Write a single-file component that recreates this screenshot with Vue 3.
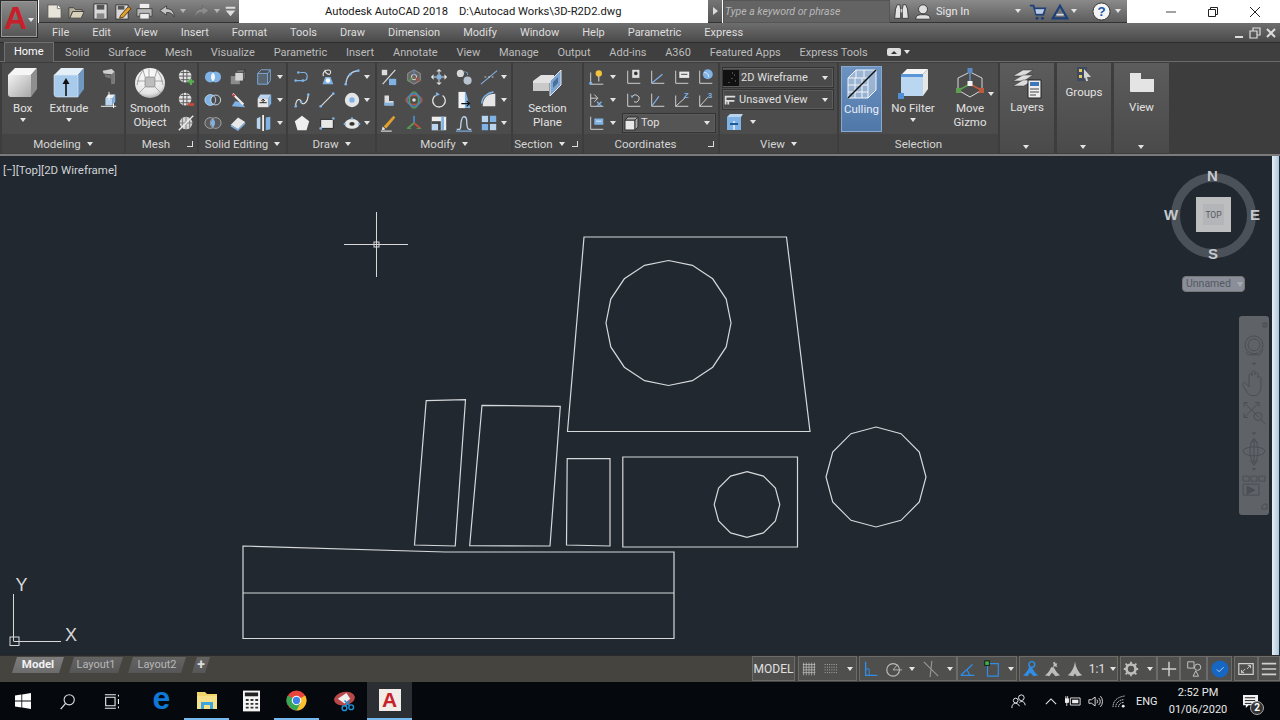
<script setup>
const blue = '#7fb2e5'
const pale = '#b9d4ee'

const icons = {
  // quick access
  new: `<path d="M3 3h10l4 4v10H3z" fill="#e8e4d8" stroke="#555"/><path d="M13 3v4h4" fill="#fff" stroke="#777"/>`,
  open: `<path d="M2 6h5l2 2h7v2H6l-3 7H2z" fill="#b9b39c" stroke="#444"/><path d="M6 10h12l-3 7H3z" fill="#d8d2bb" stroke="#444"/>`,
  save: `<path d="M3 2h14v16H3z" fill="#d9d9d9" stroke="#333"/><path d="M6 3h8v5H6z" fill="#555"/><path d="M6 12h8v6H6z" fill="#888"/>`,
  saveas: `<path d="M3 3h13v15H3z" fill="#d9d9d9" stroke="#333"/><path d="M5 4h7v4H5z" fill="#555"/><path d="M8 14l8-9 3 2-8 9-4 1z" fill="#e0a030" stroke="#5a3a10"/>`,
  print: `<path d="M5 2h10v5H5z" fill="#eee"/><path d="M2 7h16v8H2z" fill="#b8b8b8" stroke="#444"/><path d="M5 12h10v6H5z" fill="#eee" stroke="#555"/>`,
  undo: `<path d="M9 4L2 9l7 5v-3c4 0 6 1 8 5 0-6-3-9-8-9z" fill="#c4c4c4" stroke="#444"/>`,
  redo: `<path d="M11 4l7 5-7 5v-3c-4 0-6 1-8 5 0-6 3-9 8-9z" fill="#8b8b8b" stroke="#6a6a6a"/>`,
  qatmenu: `<path d="M5 5h10v2H5zM5 9h10l-5 6z" fill="#ddd"/>`,

  // modeling, mesh
  presspull: `<path d="M3 3l10-2 3 3v13l-3 1V7L4 6z" fill="#cfcfcf"/><path d="M13 7l3-3v13l-3 1zM5 7l7 1v4L6 10z" fill="#777"/>`,
  extface: `<path d="M6 8h8v8H6z" fill="${pale}"/><path d="M6 8l3-4h8l-3 4z" fill="#e6eff7"/><path d="M14 8l3-4v8l-3 4z" fill="${blue}"/><path d="M1 17h17M15 14v5M10 1v9" stroke="#fff" fill="none"/>`,
  meshadd: `<circle cx="9" cy="9" r="7" fill="#e3e3e3"/><path d="M2 9h14M4 5h10M4 13h10M7 2v14M11 2v14" stroke="#555" fill="none"/><path d="M12 15h7M15.5 12v7" stroke="#58b050" stroke-width="2.5"/>`,
  meshsub: `<circle cx="9" cy="9" r="7" fill="#e3e3e3"/><path d="M2 9h14M4 5h10M4 13h10M7 2v14M11 2v14" stroke="#555" fill="none"/><path d="M12 15h7" stroke="#c84a3a" stroke-width="3"/>`,
  meshcut: `<circle cx="10" cy="10" r="7" fill="#d5d5d5"/><path d="M3 10h14M10 3v14M6 4v12M14 4v12" stroke="#777" fill="none"/><path d="M2 18L18 2" stroke="#eee" stroke-width="1.5"/>`,

  // solid editing
  union: `<circle cx="7" cy="10" r="6" fill="${blue}"/><circle cx="13" cy="10" r="6" fill="${blue}"/><path d="M10 5c-3 3-3 7 0 10 3-3 3-7 0-10z" fill="#f2f6fa"/>`,
  subtract: `<circle cx="7" cy="10" r="6" fill="${blue}"/><circle cx="13" cy="10" r="5.5" fill="#4b4b4b" stroke="#d5e3f0"/><circle cx="7" cy="10" r="6" fill="none" stroke="${pale}"/>`,
  intersect: `<circle cx="7" cy="10" r="6" fill="#5a5a5a" stroke="#aaa"/><circle cx="13" cy="10" r="6" fill="#5a5a5a" stroke="#aaa"/><path d="M10 5c-3 3-3 7 0 10 3-3 3-7 0-10z" fill="${blue}"/>`,
  boxes: `<path d="M2 9h10v9H2z" fill="#8c8c8c"/><path d="M7 5h9v9H7z" fill="#d2d2d2"/><path d="M7 5l3-3h8l-2 3zM16 5l2-3v9l-2 3z" fill="#777" stroke="#222" stroke-width=".5"/>`,
  wirebox: `<path d="M3 6h11v12H3zM3 6l4-4h10v12l-3 4M14 6l3-4" fill="none" stroke="${blue}"/><path d="M3 6h11v12H3z" fill="${blue}" opacity=".25"/>`,
  fillet: `<path d="M3 17l4-6 7 2 4 5z" fill="${blue}"/><path d="M4 3l12 12" stroke="#eee" stroke-width="2.5"/><path d="M3 2l4 3-2 2z" fill="#c33"/>`,
  boxup: `<path d="M3 8h12v10H3z" fill="#e6e6e6"/><path d="M3 8l3-4h12l-3 4z" fill="${pale}"/><path d="M15 8l3-4v10l-3 4z" fill="${blue}"/><path d="M5 13h8M9 9v4M7 11l2-2 2 2" stroke="#111" fill="none"/>`,
  eraser: `<path d="M2 12l8-8 8 5-8 8z" fill="#e8e8e8"/><path d="M2 12l8 5v2l-8-5z" fill="${blue}"/><path d="M10 17l8-8v2l-8 8z" fill="${blue}"/>`,
  columns: `<path d="M2 5l4-2v14l-4-1z" fill="${pale}"/><path d="M12 4l5-1v14l-5 1z" fill="${blue}"/><path d="M9 1v18" stroke="#eee" stroke-width="2"/>`,

  // draw
  pline: `<path d="M4 14h8c5 0 5-9 0-9H8" fill="none" stroke="${blue}" stroke-width="1.3"/><circle cx="3" cy="14" r="1.5" fill="${blue}"/><circle cx="11" cy="14" r="1.5" fill="${blue}"/><circle cx="6" cy="5" r="1.5" fill="${blue}"/>`,
  hatch: `<path d="M5 18l3-8h6l3 8z" fill="${blue}"/><circle cx="11" cy="14" r="2.5" fill="#fff"/><path d="M6 9c-2-7 9-9 8-4S7 5 8 2" fill="none" stroke="#ddd" stroke-width="1.3"/>`,
  arc3: `<path d="M3 18C4 9 8 4 17 3" fill="none" stroke="${pale}" stroke-width="1.3"/><circle cx="3" cy="18" r="1.5" fill="${blue}"/><circle cx="8" cy="7" r="1.5" fill="${blue}"/><circle cx="17" cy="3" r="1.5" fill="${blue}"/>`,
  spline: `<path d="M3 17C3 8 8 8 9 12s7 3 8-8" fill="none" stroke="#e4e4e4" stroke-width="1.3"/><circle cx="3" cy="17" r="1.5" fill="${blue}"/><circle cx="9" cy="12" r="1.5" fill="${blue}"/><circle cx="17" cy="4" r="1.5" fill="${blue}"/>`,
  line: `<path d="M3 17L17 3" stroke="#e0e0e0" stroke-width="1.2"/><circle cx="3" cy="17" r="1.5" fill="${blue}"/><circle cx="17" cy="3" r="1.5" fill="${blue}"/>`,
  disc: `<circle cx="10" cy="10" r="8" fill="#e2e4e6"/><circle cx="10" cy="10" r="3" fill="${blue}"/>`,
  pentagon: `<path d="M10 2l8 6-3 10H5L2 8z" fill="#efefef"/>`,
  rect: `<path d="M3 6h14v10H3z" fill="#e8e8e8" stroke="#222"/><circle cx="3" cy="16" r="1.5" fill="${blue}"/><circle cx="17" cy="5" r="1.5" fill="${blue}"/>`,
  ellipse: `<ellipse cx="10" cy="11" rx="8" ry="5.5" fill="#e8e8e8"/><ellipse cx="10" cy="11" rx="3" ry="2" fill="#333"/><circle cx="10" cy="5" r="1.3" fill="${blue}"/><circle cx="2" cy="11" r="1.3" fill="${blue}"/><circle cx="18" cy="11" r="1.3" fill="${blue}"/>`,

  // modify
  trimbox: `<path d="M2 2h6v6H2z" fill="#ddd"/><path d="M10 12h8v7h-8z" fill="${blue}"/><path d="M3 18L17 2" stroke="#ddd" stroke-width="1.3"/>`,
  rotate3d: `<path d="M10 2l7 4v8l-7 4-7-4V6z" fill="#666" stroke="#999"/><circle cx="10" cy="10" r="3" fill="none" stroke="#ddd"/><path d="M4 15l5-5" stroke="#5a9a50" stroke-width="1.5"/><path d="M11 10l6 5" stroke="#b84a3a" stroke-width="1.5"/><path d="M10 2v6" stroke="#5a85c0" stroke-width="1.5"/>`,
  move: `<path d="M10 1l3 3H7zM10 19l3-3H7zM1 10l3-3v6zM19 10l-3-3v6z" fill="#e6e6e6"/><path d="M4 10h12M10 4v12" stroke="#e6e6e6"/><rect x="7.5" y="7.5" width="5" height="5" fill="${blue}"/>`,
  copy: `<circle cx="6" cy="6" r="4" fill="#d8d8d8"/><circle cx="14" cy="14" r="4.5" fill="#b9c4d0"/><path d="M9 4l5 1v4" stroke="${blue}" fill="none" stroke-dasharray="2 1"/>`,
  trim: `<path d="M1 18L19 3" stroke="${blue}" stroke-width="1.2"/><path d="M5 10h11" stroke="#ddd" stroke-dasharray="2 2"/>`,
  lshape: `<path d="M5 5h5v6h5v5H5z" fill="#dcdcdc"/><path d="M5 13h10v3H5z" fill="${blue}"/>`,
  gizmo3: `<ellipse cx="10" cy="10" rx="9" ry="5" fill="none" stroke="#c0503c" stroke-width="1.5"/><ellipse cx="10" cy="10" rx="5" ry="9" fill="none" stroke="#55a050" stroke-width="1.5"/><circle cx="10" cy="10" r="7" fill="none" stroke="#4a88c8" stroke-width="1.5"/><circle cx="10" cy="10" r="2" fill="#ddd"/>`,
  rotate: `<path d="M6 5a7 7 0 1 0 8 0" fill="none" stroke="#e0e0e0" stroke-width="1.5"/><path d="M7 1l4 3-5 2z" fill="${blue}"/>`,
  mirror: `<path d="M4 1h8l5 18H4z" fill="${blue}"/><path d="M4 1h7v18H4z" fill="#f2f2f2"/><path d="M7 14h9M13 11l3 3-3 3" stroke="#111" stroke-width="1.3" fill="none"/>`,
  filletb: `<path d="M3 17c0-9 5-14 14-14v14z" fill="#e6e6e6"/><path d="M2 14C2 7 8 2 15 1" stroke="${blue}" stroke-width="1.8" fill="none"/>`,
  brush: `<path d="M4 14L15 2l2 2L7 16z" fill="#e0a030"/><path d="M3 14l3 3-4 1z" fill="#eee"/><path d="M1 19h12" stroke="#ddd" stroke-width="1.3"/>`,
  scale3: `<path d="M10 2v8" stroke="#4a88c8" stroke-width="2"/><path d="M10 10L3 16" stroke="#55a050" stroke-width="2"/><path d="M10 10l7 6" stroke="#c0503c" stroke-width="2"/><path d="M2 16h5M13 16h5" stroke="#55a050" fill="none"/>`,
  offset: `<path d="M2 3h16v15H2z" fill="#ededed"/><path d="M2 8h10v10H2z" fill="#444"/><path d="M2 11h7v7H2z" fill="${pale}"/><path d="M14 3v15" stroke="${blue}" stroke-width="3"/>`,
  stretch: `<path d="M2 17h3c2 0 1-5 2-9s1-5 3-5 3 1 3 5 0 9 3 9h2" fill="none" stroke="${pale}" stroke-width="1.5"/><path d="M1 19h18" stroke="${blue}" stroke-width="1.3"/>`,
  array: `<path d="M2 2h7v7H2z" fill="${pale}"/><path d="M11 2h7v7h-7zM2 11h7v7H2z" fill="${blue}"/><path d="M11 11h7v7h-7z" fill="${pale}"/>`,

  // coordinates
  ucsSun: `<path d="M3 5v13h14" fill="none" stroke="#ddd"/><circle cx="3" cy="17" r="1.8" fill="${blue}"/><circle cx="12" cy="6" r="3.5" fill="#f4c43c"/><path d="M12 9v6" stroke="#eee"/>`,
  ucsDoc: `<path d="M3 3v14h14" fill="none" stroke="#ddd"/><path d="M8 2h8v9H8z" fill="#ddd"/><circle cx="12" cy="6" r="2" fill="#333"/>`,
  ucsBlue: `<path d="M3 3v14h14" fill="none" stroke="#ddd"/><path d="M3 17L15 7" stroke="${blue}" stroke-width="1.3"/>`,
  ucsCard: `<path d="M3 3v14h14" fill="none" stroke="#ddd"/><path d="M7 4h11v7H7z" fill="#e8e8e8"/><path d="M9 7h7" stroke="#333"/>`,
  ucsGlobe: `<path d="M3 3v14h14" fill="none" stroke="#ddd"/><circle cx="12" cy="7" r="5.5" fill="${blue}"/><path d="M8 5c3 0 5 2 5 5" stroke="#eee" fill="none"/>`,
  ucsX: `<path d="M3 3v14h14" fill="none" stroke="#ddd"/><path d="M3 8h7M7 4l4 4-4 4" fill="none" stroke="#ddd"/><path d="M10 12l5 5M15 12l-5 5" stroke="${blue}" stroke-width="1.5"/>`,
  ucsUndo: `<path d="M3 3v14h14" fill="none" stroke="#ddd"/><path d="M8 7a4 4 0 1 1 2 5" fill="none" stroke="#ddd"/><path d="M6 5l3 0-1 3z" fill="${blue}"/>`,
  ucsBlue2: `<path d="M3 3v14h14" fill="none" stroke="#ddd"/><path d="M3 17L11 6" stroke="${blue}" stroke-width="1.3"/>`,
  ucsZ: `<path d="M3 5v12h14" fill="none" stroke="#ddd"/><path d="M3 17L14 7" stroke="#ddd"/><text x="12" y="8" font-size="9" font-weight="700" fill="${blue}" font-family="Liberation Sans">Z</text>`,
  ucs3: `<path d="M3 5v12h14" fill="none" stroke="#ddd"/><path d="M3 17L12 7" stroke="#ddd"/><text x="12" y="8" font-size="9" font-weight="700" fill="${blue}" font-family="Liberation Sans">3</text>`,
  ucsPlane: `<path d="M3 3v14h14" fill="none" stroke="#ddd"/><path d="M7 5h10v7H7z" fill="${blue}"/><path d="M9 8h6" stroke="#eee"/>`,
  viewBox: `<path d="M3 5h14v13H3z" fill="${blue}"/><path d="M3 5l3-3h13l-2 3z" fill="${pale}"/><path d="M10 9v9" stroke="#eee" stroke-width="1.5"/><path d="M6 12h8" stroke="#1b5c98" stroke-width="2"/>`,

  // status bar
  grid: `<path d="M4 3v14M7 3v14M10 3v14M13 3v14M16 3v14M3 5h14M3 8h14M3 11h14M3 14h14" stroke="#c0c0c0" stroke-width=".8"/>`,
  snap: `<path d="M3 5h14M3 8h14M3 11h14M3 14h14" stroke="#bbb" stroke-dasharray="1 1.5"/>`,
  ortho: `<path d="M4 2v15h13" fill="none" stroke="#2f8fe8" stroke-width="1.5"/><path d="M4 10h4v7" fill="none" stroke="#2f8fe8"/>`,
  polar: `<circle cx="9" cy="11" r="7" fill="none" stroke="#bbb" stroke-width="1.3"/><path d="M9 11h10M9 11l5-6" stroke="#bbb"/>`,
  iso: `<path d="M2 2l16 16M11 1L9 19" stroke="#999" stroke-width="1.2"/>`,
  lweight: `<path d="M2 17L15 5" stroke="#2f8fe8" stroke-width="1.3"/><path d="M2 17h15M9 11l3 6" stroke="#2f8fe8" stroke-width="1.3"/>`,
  osnap: `<path d="M5 4h12v14H5z" fill="none" stroke="#2f8fe8" stroke-width="1.3"/><rect x="2" y="1" width="5" height="5" fill="#3cb54a" stroke="#111"/>`,
  anno: `<path d="M9 8c-2 5-4 7-7 9l5 1 3-4 4 4 5-1c-3-2-5-5-7-9z" fill="#2f8fe8"/><circle cx="12" cy="5" r="3.2" fill="none" stroke="#2f8fe8" stroke-width="1.6"/>`,
  annoGray: `<path d="M9 8c-2 5-4 7-7 9l5 1 3-4 4 4 5-1c-3-2-5-5-7-9z" fill="#bdbdbd"/><path d="M13 2l1 2 2 0-1 2 1 2-3-1-2 1 1-3-1-2z" fill="#bdbdbd"/>`,
  annoGray2: `<path d="M10 2c-1 7-4 12-8 15l6 1 2-3 2 3 6-1c-4-3-7-8-8-15z" fill="#bdbdbd"/>`,
  gear: `<circle cx="10" cy="10" r="5" fill="none" stroke="#bdbdbd" stroke-width="3"/><path d="M10 2v3M10 15v3M2 10h3M15 10h3M4 4l2 2M14 14l2 2M16 4l-2 2M6 14l-2 2" stroke="#bdbdbd" stroke-width="2"/>`,
  plus: `<path d="M10 2v16M2 10h16" stroke="#d0d0d0" stroke-width="1.6"/>`,
  shapes: `<path d="M3 2h7v7H3z" fill="none" stroke="#ccc"/><circle cx="14" cy="8" r="3.5" fill="none" stroke="#ccc"/><path d="M9 18l3-6 3 6z" fill="none" stroke="#ccc"/>`,
  isolate: `<circle cx="10" cy="10" r="9.5" fill="#1667c4"/><path d="M6.5 10.5l2.5 2.5 5-5" fill="none" stroke="#c7ddf3" stroke-width="1"/>`,
  full: `<path d="M2 4h16v12H2z" fill="none" stroke="#d0d0d0" stroke-width="1.3"/><path d="M5 14l4-4M5 11v3h3M15 6l-4 4M15 9V6h-3" stroke="#d0d0d0" fill="none"/>`,
  burger: `<path d="M2 4h16M2 10h16M2 16h16" stroke="#d0d0d0" stroke-width="1.8"/>`
}

const qat = [['new', 22], ['open', 22], ['save', 22, 2], ['saveas', 22], ['print', 22], ['undo', 22, 1], ['caret', 10], ['redo', 22, 2], ['caret', 10], ['qatmenu', 16]]
const menus = ['File', 'Edit', 'View', 'Insert', 'Format', 'Tools', 'Draw', 'Dimension', 'Modify', 'Window', 'Help', 'Parametric', 'Express']
const tabs = ['Solid', 'Surface', 'Mesh', 'Visualize', 'Parametric', 'Insert', 'Annotate', 'View', 'Manage', 'Output', 'Add-ins', 'A360', 'Featured Apps', 'Express Tools']

const modelingSmall = ['presspull', 'extface']
const meshSmall = ['meshadd', 'meshsub', 'meshcut']
const solidTools = ['union', 'boxes', 'wirebox', 'caret', 'subtract', 'fillet', 'boxup', 'caret', 'intersect', 'eraser', 'columns', 'caret']
const drawTools = ['pline', 'hatch', 'arc3', 'caret', 'spline', 'line', 'disc', 'caret', 'pentagon', 'rect', 'ellipse', 'caret']
const modifyTools = ['trimbox', 'rotate3d', 'move', 'copy', 'trim', 'caret', 'lshape', 'gizmo3', 'rotate', 'mirror', 'filletb', 'caret', 'brush', 'scale3', 'offset', 'stretch', 'array', 'caret']
const coordTools = ['ucsSun', 'caret', 'blank', 'ucsDoc', 'ucsBlue', 'ucsCard', 'ucsGlobe', 'ucsX', 'caret', 'blank', 'ucsUndo', 'ucsBlue2', 'ucsZ', 'ucs3']

// px widths of the status bar cells, measured from the screenshot
const statusGroups = [
  { gap: 0, items: [{ w: 43, text: 'MODEL' }] },
  { gap: 3, items: [{ w: 22, icon: 'grid' }, { w: 22, icon: 'snap' }, { w: 15, icon: 'caret' }] },
  { gap: 2, items: [{ w: 24, icon: 'ortho' }, { w: 22, icon: 'polar' }, { w: 14, icon: 'caret' }, { w: 24, icon: 'iso' }, { w: 14, icon: 'caret' }] },
  { gap: 0, items: [{ w: 22, icon: 'lweight' }, { w: 26, icon: 'osnap' }, { w: 12, icon: 'caret' }] },
  { gap: 2, items: [{ w: 22, icon: 'anno' }, { w: 22, icon: 'annoGray' }, { w: 24, icon: 'annoGray2' }, { w: 20, text: '1:1' }, { w: 11, icon: 'caret' }] },
  { gap: 2, items: [{ w: 22, icon: 'gear' }, { w: 15, icon: 'caret' }] },
  { gap: 0, items: [{ w: 23, icon: 'plus' }] },
  { gap: 0, items: [{ w: 27, icon: 'shapes' }] },
  { gap: 0, items: [{ w: 25, icon: 'isolate' }] },
  { gap: 2, items: [{ w: 24, icon: 'full' }] },
  { gap: 0, items: [{ w: 22, icon: 'burger' }] }
]

function polygon(cx, cy, r, sides) {
  const pts = []
  for (let i = 0; i < sides; i++) {
    const a = (i / sides) * Math.PI * 2
    pts.push(`${(cx + Math.sin(a) * r).toFixed(1)},${(cy - Math.cos(a) * r).toFixed(1)}`)
  }
  return pts.join(' ')
}

const drawing = [
  '584,237 786.5,237 810,431.5 567.5,431.5',
  '426.2,400.7 465.5,399.7 455.2,546 414.5,545',
  '482,405.3 560.3,406.3 550,546 469.7,545.7',
  '567.2,458.7 610,458.7 610,546 566.5,545',
  '622.8,457 797.5,457 797.5,547 622.8,547',
  '243,546 445,552 674,552 674,638.5 243,638.5',
  polygon(668.5, 323, 62.5, 16),
  polygon(747, 504.5, 32.8, 12),
  polygon(876, 477, 50, 12)
]
</script>

<template>
  <div class="app">
    <!-- title bar -->
    <header class="titlebar">
      <div class="app-button">
        <span class="app-a">A</span>
        <i class="caret app-caret"></i>
      </div>
      <div class="qat">
        <span v-for="q in qat" :key="q[0] + q[1]" class="qat-cell" :style="{ width: q[1] + 'px', marginLeft: (q[2] || 0) + 'px' }">
          <i v-if="q[0] === 'caret'" class="caret caret-dim"></i>
          <svg v-else viewBox="0 0 20 20" width="19" height="19" v-html="icons[q[0]]"></svg>
        </span>
      </div>
      <div class="doc-title">
        <span>Autodesk AutoCAD 2018</span>
        <span class="doc-path">D:\Autocad Works\3D-R2D2.dwg</span>
      </div>
      <div class="search-arrow"><i class="caret-right"></i></div>
      <div class="search-box">Type a keyword or phrase</div>
      <div class="account">
        <svg class="acc-bino" viewBox="0 0 20 20" width="17" height="17">
          <path d="M2 18l1-11 2-5h3l1 5v11zM11 18V7l1-5h3l2 5 1 11z" fill="#e4e4e4" stroke="#333"/>
          <path d="M9 7h2v4H9z" fill="#ccc"/>
        </svg>
        <svg class="acc-user" viewBox="0 0 20 20" width="18" height="18">
          <circle cx="10" cy="7" r="5" fill="#e0e0e0" stroke="#333"/>
          <path d="M2 18c0-5 4-5 8-5s8 0 8 5z" fill="#e0e0e0" stroke="#333"/>
        </svg>
        <span class="sign-in">Sign In</span>
        <i class="caret acc-caret1"></i>
        <svg class="acc-cart" viewBox="0 0 20 20" width="18" height="18">
          <path d="M1 3h4l3 10h8l2-7H6" fill="none" stroke="#1d3f7a" stroke-width="2"/>
          <circle cx="9" cy="17" r="1.7" fill="#1d3f7a"/><circle cx="15" cy="17" r="1.7" fill="#1d3f7a"/>
          <path d="M7 7h10l-2 5H8z" fill="#b8cbe4"/>
        </svg>
        <svg class="acc-tri" viewBox="0 0 20 20" width="18" height="18">
          <path d="M10 3l8 14H2z" fill="none" stroke="#1d3f7a" stroke-width="2.4"/>
          <path d="M6 13h8" stroke="#d3dce8" stroke-width="2"/>
        </svg>
        <i class="caret acc-caret2"></i>
        <svg class="acc-help" viewBox="0 0 20 20" width="19" height="19">
          <circle cx="10" cy="10" r="9" fill="#f4f4f4" stroke="#333"/>
          <text x="10" y="15" text-anchor="middle" font-size="14" font-weight="700" fill="#1a56a8" font-family="Liberation Sans">?</text>
        </svg>
        <i class="caret acc-caret3"></i>
      </div>
      <div class="window-btns">
        <svg viewBox="0 0 12 12" width="12" height="12"><path d="M1 6h10" stroke="#444"/></svg>
        <svg viewBox="0 0 12 12" width="12" height="12"><path d="M1.5 3.5h7v7h-7zM3.5 3V1.5h7v7H9" fill="none" stroke="#222"/></svg>
        <svg viewBox="0 0 12 12" width="12" height="12"><path d="M1 1l10 10M11 1L1 11" stroke="#222"/></svg>
      </div>
    </header>

    <!-- menu bar -->
    <nav class="menubar">
      <span v-for="m in menus" :key="m">{{ m }}</span>
      <div class="doc-btns">
        <svg viewBox="0 0 12 12" width="12" height="12"><path d="M2 10h8" stroke="#ddd" stroke-width="2"/></svg>
        <svg viewBox="0 0 12 12" width="12" height="12"><path d="M1 4h7v7H1zM4 4V1h7v7H8" fill="none" stroke="#ddd" stroke-width="1.2"/></svg>
        <svg viewBox="0 0 12 12" width="12" height="12"><path d="M2 2l8 8M10 2l-8 8" stroke="#ddd" stroke-width="2"/></svg>
      </div>
    </nav>

    <!-- ribbon tabs -->
    <div class="tabs">
      <span class="tab tab-active">Home</span>
      <span v-for="t in tabs" :key="t" class="tab">{{ t }}</span>
      <span class="tab-extra">
        <svg viewBox="0 0 14 8" width="14" height="8"><rect width="14" height="8" rx="2" fill="#ddd"/><path d="M4 6l3-3 3 3z" fill="#333"/></svg>
        <i class="caret"></i>
      </span>
    </div>

    <!-- ribbon -->
    <div class="ribbon">
      <section class="panel p-modeling">
        <div class="panel-body">
          <div class="big big-box">
            <svg viewBox="0 0 32 32" width="32" height="32">
              <path d="M1 8l7-7h22l-6 7z" fill="#f6f6f6"/>
              <path d="M24 8l6-7v21l-6 8z" fill="#8e8e8e"/>
              <path d="M1 8h23v22H4a3 3 0 0 1-3-3z" fill="url(#gradBox)"/>
            </svg>
            <span>Box</span><i class="caret"></i>
          </div>
          <div class="big big-extrude">
            <svg viewBox="0 0 32 32" width="32" height="32">
              <path d="M1 8l7-7h23l-6 7z" fill="#e5eff8"/>
              <path d="M25 8l6-7v21l-6 8z" fill="#6f99c2"/>
              <path d="M1 8h24v22H4a3 3 0 0 1-3-3z" fill="#a8cbec" stroke="#dde9f3" stroke-width=".6"/>
              <path d="M13 29V15" stroke="#111" stroke-width="1.6"/><path d="M9.5 17L13 11l3.5 6z" fill="#111"/>
            </svg>
            <span>Extrude</span><i class="caret"></i>
          </div>
          <div class="tool-col col-model">
            <span v-for="t in modelingSmall" :key="t" class="tool"><svg viewBox="0 0 20 20" width="20" height="20" v-html="icons[t]"></svg></span>
          </div>
        </div>
        <div class="panel-title">Modeling <i class="caret"></i></div>
      </section>

      <section class="panel p-mesh">
        <div class="panel-body">
          <div class="big big-smooth">
            <svg viewBox="0 0 32 32" width="32" height="32">
              <circle cx="16" cy="16" r="15" fill="url(#gradSphere)"/>
              <rect x="11" y="10" width="10" height="10" rx="1" fill="#bdbdbd" stroke="#777" stroke-width=".6"/>
              <path d="M9 3L5 10l-2 8M23 3l4 7 2 8M11 10L9 3M21 10l2-7M11 20l-6 6M21 20l6 6M11 14H3M21 14h8M15 2v8" fill="none" stroke="#8a8a8a" stroke-width=".7"/>
            </svg>
            <span>Smooth</span><span>Object</span>
          </div>
          <div class="tool-col col-mesh">
            <span v-for="t in meshSmall" :key="t" class="tool"><svg viewBox="0 0 20 20" width="20" height="20" v-html="icons[t]"></svg></span>
          </div>
        </div>
        <div class="panel-title title-launch">Mesh <i class="launch"></i></div>
      </section>

      <section class="panel p-solid">
        <div class="panel-body">
          <div class="tool-grid grid-solid">
            <span v-for="(t, i) in solidTools" :key="i" class="tool">
              <i v-if="t === 'caret'" class="caret"></i>
              <svg v-else viewBox="0 0 20 20" width="20" height="20" v-html="icons[t]"></svg>
            </span>
          </div>
        </div>
        <div class="panel-title">Solid Editing <i class="caret"></i></div>
      </section>

      <section class="panel p-draw">
        <div class="panel-body">
          <div class="tool-grid grid-draw">
            <span v-for="(t, i) in drawTools" :key="i" class="tool">
              <i v-if="t === 'caret'" class="caret"></i>
              <svg v-else viewBox="0 0 20 20" width="20" height="20" v-html="icons[t]"></svg>
            </span>
          </div>
        </div>
        <div class="panel-title">Draw <i class="caret"></i></div>
      </section>

      <section class="panel p-modify">
        <div class="panel-body">
          <div class="tool-grid grid-modify">
            <span v-for="(t, i) in modifyTools" :key="i" class="tool">
              <i v-if="t === 'caret'" class="caret"></i>
              <svg v-else viewBox="0 0 20 20" width="20" height="20" v-html="icons[t]"></svg>
            </span>
          </div>
        </div>
        <div class="panel-title">Modify <i class="caret"></i></div>
      </section>

      <section class="panel p-section">
        <div class="panel-body body-center">
          <div class="big">
            <svg viewBox="0 0 32 32" width="32" height="32">
              <path d="M2 14l8-6h13v8l-14 0v8H2z" fill="#e2e2e2"/>
              <path d="M2 16h16v8H2z" fill="#c9c9c9"/>
              <path d="M19 14l11-11v15l-11 11z" fill="#7ea6d2" stroke="#dfe8f2"/>
              <path d="M22 15l5-5v6l-5 5z" fill="#4c6f9a"/>
            </svg>
            <span>Section</span><span>Plane</span>
          </div>
        </div>
        <div class="panel-title title-launch title-section">Section <i class="caret"></i> <i class="launch"></i></div>
      </section>

      <section class="panel p-coord">
        <div class="panel-body">
          <div class="tool-grid grid-coord">
            <span v-for="(t, i) in coordTools" :key="i" class="tool">
              <i v-if="t === 'caret'" class="caret"></i>
              <template v-else-if="t === 'blank'"></template>
              <svg v-else viewBox="0 0 20 20" width="20" height="20" v-html="icons[t]"></svg>
            </span>
            <span class="tool"><svg viewBox="0 0 20 20" width="20" height="20" v-html="icons.ucsPlane"></svg></span>
            <span class="tool"><i class="caret"></i></span>
            <span class="tool"></span>
            <div class="combo combo-top">
              <svg viewBox="0 0 16 16" width="16" height="16"><path d="M2 5h10v10H2z" fill="#e8e8e8" stroke="#333"/><path d="M2 5l3-3h10l-3 3zM12 5l3-3v10l-3 3z" fill="#aaa" stroke="#333"/></svg>
              <span>Top</span><i class="caret combo-caret"></i>
            </div>
          </div>
        </div>
        <div class="panel-title title-launch">Coordinates <i class="launch"></i></div>
      </section>

      <section class="panel p-view">
        <div class="panel-body body-col">
          <div class="combo">
            <svg viewBox="0 0 16 16" width="16" height="16"><rect width="16" height="16" fill="#111"/><path d="M9 3h1M11 5h1M9 8v1M6 12v1M12 11h1" stroke="#888"/></svg>
            <span>2D Wireframe</span><i class="caret combo-caret"></i>
          </div>
          <div class="combo">
            <svg viewBox="0 0 16 16" width="14" height="14"><path d="M2 3h12v2H4v3h9v2H7v3H5v-3H4v3H2z" fill="#ddd"/></svg>
            <span>Unsaved View</span><i class="caret combo-caret"></i>
          </div>
          <div class="view-tool">
            <svg viewBox="0 0 20 20" width="20" height="20" v-html="icons.viewBox"></svg>
            <i class="caret"></i>
          </div>
        </div>
        <div class="panel-title">View <i class="caret"></i></div>
      </section>

      <section class="panel p-selection">
        <div class="panel-body">
          <div class="big big-culling">
            <svg viewBox="0 0 32 32" width="32" height="32">
              <path d="M2 10l8-8h20v20l-8 8H2z" fill="#cfdcea" opacity=".5"/>
              <path d="M2 10h20v20H2zM2 10l8-8h20v20l-8 8M22 10l8-8M9 10v20M16 10v20M2 17h20M2 24h20M10 2l0 8M18 2l0 8" fill="none" stroke="#f2f6fa"/>
              <path d="M2 30L30 2" stroke="#111" stroke-width="1.4"/>
            </svg>
            <span>Culling</span>
          </div>
          <div class="big big-filter">
            <svg viewBox="0 0 32 32" width="32" height="32">
              <path d="M5 7l5-5h21l-5 5z" fill="#f4f4f4"/>
              <path d="M26 7l5-5v20l-5 7z" fill="#e6e6e6"/>
              <path d="M4 7h22v22H7a3 3 0 0 1-3-3z" fill="#bad6f0"/>
              <path d="M4 7h22v3H4z" fill="#5b97d8"/>
              <rect x="1" y="26" width="6" height="6" fill="#4f8fd6"/>
            </svg>
            <span>No Filter</span><i class="caret"></i>
          </div>
          <div class="big big-gizmo">
            <svg viewBox="0 0 32 32" width="32" height="32">
              <path d="M16 5l12 6v12l-12 7-12-7V11z" fill="none" stroke="#d8d8d8"/>
              <path d="M16 5v12" stroke="#6a9ad0" stroke-width="1.3"/>
              <path d="M16 17L5 23" stroke="#5aa04f" stroke-width="1.5"/>
              <path d="M16 17l11 6" stroke="#c05a3c" stroke-width="1.5"/>
              <rect x="13.5" y="1" width="5" height="5" fill="#5a8ac4"/>
              <rect x="2" y="21" width="5" height="5" fill="#5aa04f"/>
              <rect x="25" y="21" width="5" height="5" fill="#c05a3c"/>
              <rect x="13.5" y="14" width="5" height="5" fill="#f4f4f4"/>
            </svg>
            <span>Move</span><span>Gizmo</span>
            <i class="caret gizmo-caret"></i>
          </div>
        </div>
        <div class="panel-title">Selection</div>
      </section>

      <section class="panel panel-slim p-layers">
        <div class="slim-body">
          <svg viewBox="0 0 32 32" width="32" height="32">
            <path d="M2 9l10-6h10l-9 6z" fill="#ddd" stroke="#333" stroke-width=".5"/>
            <path d="M2 14l10-6h10l-9 6z" fill="#ddd" stroke="#333" stroke-width=".5"/>
            <path d="M2 19l10-6h10l-9 6z" fill="#ddd" stroke="#333" stroke-width=".5"/>
            <path d="M17 13h13v18H17z" fill="#eee" stroke="#222"/>
            <path d="M19 15h9v4h-9z" fill="#3f78b8"/>
            <path d="M19 22h9M19 25h9M19 28h6" stroke="#444"/>
          </svg>
          <span>Layers</span>
        </div>
        <i class="caret slim-caret"></i>
      </section>

      <section class="panel panel-slim p-groups">
        <div class="slim-body slim-top">
          <svg viewBox="0 0 16 16" width="16" height="16">
            <rect x="1" y="1" width="10" height="14" fill="#3d4a60"/>
            <rect x="3" y="3" width="3" height="3" fill="#e3c75a"/>
            <rect x="3" y="9" width="3" height="3" fill="#e3c75a"/>
            <path d="M8 3l7 8-4 0 1 4-2 0-1-4-1 2z" fill="#d4d4d4"/>
          </svg>
          <span>Groups</span>
        </div>
        <i class="caret slim-caret"></i>
      </section>

      <section class="panel panel-slim p-viewslim">
        <div class="slim-body">
          <svg viewBox="0 0 26 20" width="26" height="20" class="folder">
            <path d="M1 1h11v6h13v13H2a1 1 0 0 1-1-1z" fill="#e4e4e4"/>
          </svg>
          <span>View</span>
        </div>
        <i class="caret slim-caret"></i>
      </section>
    </div>

    <svg class="defs" width="0" height="0">
      <defs>
        <linearGradient id="gradBox" x1="0" y1="0" x2="1" y2="1">
          <stop offset="0" stop-color="#f2f2f2"/><stop offset="1" stop-color="#a8a8a8"/>
        </linearGradient>
        <radialGradient id="gradSphere" cx=".45" cy=".3" r=".8">
          <stop offset="0" stop-color="#ffffff"/><stop offset=".7" stop-color="#e4e4e4"/><stop offset="1" stop-color="#8c8c8c"/>
        </radialGradient>
      </defs>
    </svg>

    <!-- drawing area -->
    <main class="canvas-row">
      <div class="canvas">
        <svg class="drawing" viewBox="0 156 1272 499" width="1272" height="499">
          <polygon v-for="(p, i) in drawing" :key="i" :points="p" class="edge"/>
          <line x1="243" y1="593" x2="674" y2="593" class="edge"/>
          <!-- crosshair -->
          <path d="M344 244.5h64M376.5 212v65" class="cursor"/>
          <rect x="374" y="242" width="5" height="5" class="cursor"/>
          <!-- ucs icon -->
          <path d="M13.5 594v47M13.5 641.5h47.5" class="cursor"/>
          <rect x="10" y="637" width="9" height="8.5" class="cursor"/>
          <text x="21.5" y="590.5" class="ucs-letter">Y</text>
          <text x="71" y="640.5" class="ucs-letter">X</text>
        </svg>

        <div class="viewport-label">[−][Top][2D Wireframe]</div>

        <div class="viewcube">
          <div class="cube-ring"></div>
          <div class="cube-face"><span>TOP</span></div>
          <b class="dir dir-n">N</b>
          <b class="dir dir-s">S</b>
          <b class="dir dir-e">E</b>
          <b class="dir dir-w">W</b>
        </div>
        <div class="ucs-menu">Unnamed <i class="tri-outline"></i></div>

        <div class="navbar">
          <svg viewBox="0 0 30 200" width="30" height="199" fill="none" stroke="#4a4e55" stroke-width="1">
            <path d="M24 7h4v4h-4zM26 7v4"/>
            <circle cx="15" cy="29" r="9"/><circle cx="15" cy="29" r="6"/><path d="M7 36l2 3h12l3-5"/>
            <path d="M13 47l2 2 2-2" fill="#4a4e55"/>
            <path d="M9 78l-5-8c-1-3 2-4 3-2l3 3V60c0-3 3-3 3 0v-3c0-3 3-3 3 0v2c0-3 3-3 3 0v3c1-2 3-1 3 1v8c0 4-2 7-4 9H12z"/>
            <path d="M5 87l15 15M20 87L5 102M5 87v4M5 87h4M20 87h-4M20 87v4M5 102v-4M5 102h4"/>
            <circle cx="19" cy="101" r="4"/><path d="M22 104l5 5"/>
            <path d="M13 117l2 2 2-2" fill="#4a4e55"/>
            <path d="M15 123v27M11 128l4-5 4 5M11 145l4 5 4-5"/>
            <ellipse cx="15" cy="136" rx="11" ry="4.5"/><ellipse cx="15" cy="136" rx="4" ry="11"/>
            <path d="M13 153l2 2 2-2" fill="#4a4e55"/>
            <path d="M4 161h6v5H4zM12 161h6v5h-6zM20 161h6v5h-6zM4 169h16v11H4z"/>
            <path d="M8 171l8 4-8 4z" fill="#4a4e55"/>
            <path d="M25 189h3v5h-5v-3z"/>
          </svg>
        </div>
      </div>
      <div class="scroll-strip"></div>
    </main>

    <!-- model tabs + status bar -->
    <footer class="statusbar">
      <div class="model-tabs">
        <span class="mtab mtab-active">Model</span>
        <span class="mtab">Layout1</span>
        <span class="mtab mtab-wide">Layout2</span>
        <span class="mtab mtab-plus">+</span>
      </div>
      <div class="status-groups">
        <div v-for="(g, i) in statusGroups" :key="i" class="s-group" :style="{ marginLeft: g.gap + 'px' }">
          <span v-for="(it, j) in g.items" :key="j" class="s-cell" :style="{ width: it.w + 'px' }">
            <template v-if="it.text">{{ it.text }}</template>
            <i v-else-if="it.icon === 'caret'" class="caret"></i>
            <svg v-else viewBox="0 0 20 20" width="18" height="18" v-html="icons[it.icon]"></svg>
          </span>
        </div>
      </div>
    </footer>

    <!-- windows taskbar -->
    <div class="taskbar">
      <span class="task">
        <svg viewBox="0 0 20 20" width="16" height="16"><path d="M0 3l8-1v7.5H0zM9 2l11-2v9.5H9zM0 10.5h8V18l-8-1zM9 10.5h11V20L9 18z" fill="#fff"/></svg>
      </span>
      <span class="task">
        <svg viewBox="0 0 20 20" width="17" height="17"><circle cx="12" cy="8" r="6" fill="none" stroke="#ddd" stroke-width="1.3"/><path d="M8 12l-6 7" stroke="#ddd" stroke-width="1.5"/></svg>
      </span>
      <span class="task">
        <svg viewBox="0 0 20 20" width="17" height="17"><path d="M2 5h11v10H2zM1 2h13M1 18h13M17 2v2M17 7v6M17 16v2" fill="none" stroke="#eee" stroke-width="1.3"/></svg>
      </span>
      <span class="task task-edge"><span class="edge-e">e</span></span>
      <span class="task task-open">
        <svg viewBox="0 0 22 20" width="22" height="20"><path d="M1 2h8l2 2h10v15H1z" fill="#f2d56a"/><path d="M1 6h20v13H1z" fill="#f6e08a"/><path d="M5 12h12v7H5z" fill="#3aa6dd"/><path d="M8 15h6v4H8z" fill="#f6e08a"/></svg>
      </span>
      <span class="task">
        <svg viewBox="0 0 18 22" width="17" height="22"><path d="M0 0h18v22H0z" fill="#f4f4f4"/><path d="M2 2h14v4H2z" fill="#222"/><path d="M3 9h3v2H3zM8 9h3v2H8zM13 9h3v2h-3zM3 13h3v2H3zM8 13h3v2H8zM13 13h3v2h-3zM3 17h3v2H3zM8 17h3v2H8zM13 17h3v2h-3z" fill="#333"/></svg>
      </span>
      <span class="task task-open">
        <svg viewBox="0 0 22 22" width="21" height="21">
          <circle cx="11" cy="11" r="10.5" fill="#e8453c"/>
          <path d="M11 11L2 16.2A10.5 10.5 0 0 1 1.9 5.7z" fill="#34a853"/>
          <path d="M11 11l9.1-5.2A10.5 10.5 0 0 1 11 21.5z" fill="#fbc02d"/>
          <path d="M11 11H1.5A10.5 10.5 0 0 0 11 21.5L15 14z" fill="#34a853"/>
          <circle cx="11" cy="11" r="5" fill="#fff"/><circle cx="11" cy="11" r="3.8" fill="#3f83e8"/>
        </svg>
      </span>
      <span class="task task-snip">
        <svg viewBox="0 0 24 22" width="23" height="21">
          <ellipse cx="12" cy="8" rx="11" ry="7" fill="#b9484a" transform="rotate(-12 12 8)"/>
          <path d="M5 8l9-6 4 6-6 5z" fill="#eee"/>
          <path d="M12 10l5 5M17 10l-4 6" stroke="#1e90d8" stroke-width="1.5"/>
          <circle cx="12" cy="18" r="2.5" fill="none" stroke="#1e90d8" stroke-width="1.5"/>
          <circle cx="19" cy="17" r="2.5" fill="none" stroke="#1e90d8" stroke-width="1.5"/>
        </svg>
      </span>
      <span class="task task-cad"><span class="cad-logo">A</span></span>

      <div class="tray">
        <svg class="tray-people" viewBox="0 0 18 18" width="17" height="17"><circle cx="12" cy="5" r="3" fill="none" stroke="#eee"/><circle cx="6" cy="8" r="2.5" fill="none" stroke="#eee"/><path d="M2 16c0-4 2-5 4-5s3 1 4 3M10 10c2-2 6-1 6 3" fill="none" stroke="#eee"/></svg>
        <svg class="tray-chev" viewBox="0 0 14 8" width="12" height="7"><path d="M1 7l6-6 6 6" fill="none" stroke="#eee" stroke-width="1.2"/></svg>
        <svg class="tray-power" viewBox="0 0 18 14" width="16" height="13"><path d="M6 3h11v8H6z" fill="none" stroke="#eee"/><path d="M8 5h7v4H8z" fill="#eee"/><path d="M0 4h4v4H0zM1 1v3M3 1v3M2 8v4" stroke="#eee" fill="#eee"/></svg>
        <svg class="tray-vol" viewBox="0 0 18 14" width="16" height="13"><path d="M1 5h3l4-3v10L4 9H1z" fill="none" stroke="#eee"/><path d="M10 5a3 3 0 0 1 0 4M12 3a6 6 0 0 1 0 8M14 1a9 9 0 0 1 0 12" fill="none" stroke="#eee"/></svg>
        <svg class="tray-wifi" viewBox="0 0 16 14" width="15" height="13"><path d="M1 13C1 6 6 2 14 1M4 13c0-5 4-8 9-8M7 13c0-3 2-5 6-5" fill="none" stroke="#ccc" stroke-dasharray="1.5 .7"/><circle cx="12" cy="12" r="1.5" fill="#eee"/></svg>
        <span class="tray-lang">ENG</span>
        <div class="tray-clock"><span>2:52 PM</span><span>01/06/2020</span></div>
        <div class="tray-notif">
          <svg viewBox="0 0 18 16" width="17" height="15"><path d="M1 1h16v11H7l-3 3v-3H1z" fill="#f2f2f2"/><path d="M3 4h11M3 7h11M3 10h7" stroke="#111"/></svg>
          <span class="notif-badge">2</span>
        </div>
      </div>
    </div>
  </div>
</template>

<style scoped>
.app {
  width: 1280px;
  height: 720px;
  display: flex;
  flex-direction: column;
  overflow: hidden;
  position: relative;
  font-family: Roboto, "Noto Sans", sans-serif;
  font-size: 11.5px;
  color: #d8d8d8;
  background: #212830;
}
i { display: inline-block; font-style: normal; }
svg { display: block; flex: none; }
.defs { position: absolute; }

.caret {
  width: 0;
  height: 0;
  border-left: 3.5px solid transparent;
  border-right: 3.5px solid transparent;
  border-top: 4px solid #e4e4e4;
}
.caret-dim { border-top-color: #b5b5b5; border-left-width: 3px; border-right-width: 3px; }
.launch {
  width: 5px;
  height: 5px;
  border-right: 1.5px solid #ddd;
  border-bottom: 1.5px solid #ddd;
}

/* title bar */
.titlebar {
  height: 23px;
  display: flex;
  flex: none;
  background: #fff;
}
.app-button {
  position: absolute;
  left: 0;
  top: 0;
  width: 38px;
  height: 38px;
  z-index: 2;
  background: linear-gradient(#8c8c8c, #565656);
  border: 1px solid #2c2c2c;
  box-sizing: border-box;
  box-shadow: inset 0 0 0 1px #999;
}
.app-a {
  position: absolute;
  left: 3px;
  top: 1px;
  font-family: "Liberation Sans", sans-serif;
  font-weight: 700;
  font-size: 32px;
  line-height: 32px;
  color: #c8202a;
}
.app-caret { position: absolute; right: 3px; top: 17px; }
.qat {
  width: 200px;
  margin-left: 39px;
  padding-left: 4px;
  box-sizing: border-box;
  display: flex;
  align-items: center;
  background: linear-gradient(#858585, #5c5c5c);
  border-bottom: 1px solid #333;
}
.qat-cell {
  display: flex;
  align-items: center;
  justify-content: center;
  flex: none;
}
.doc-title {
  width: 469px;
  padding-left: 86px;
  box-sizing: border-box;
  display: flex;
  align-items: center;
  color: #1a1a1a;
  font-size: 11.2px;
  white-space: nowrap;
}
.doc-path { margin-left: 11px; }
.search-arrow {
  width: 14px;
  background: linear-gradient(#757575, #555);
  display: flex;
  align-items: center;
  justify-content: center;
  border-bottom: 1px solid #333;
}
.caret-right {
  width: 0;
  height: 0;
  border-top: 4px solid transparent;
  border-bottom: 4px solid transparent;
  border-left: 5px solid #ddd;
}
.search-box {
  width: 167px;
  margin-left: 1px;
  padding-left: 1px;
  box-sizing: border-box;
  background: #636363;
  border: 1px solid #555;
  color: #b9b9b9;
  font-style: italic;
  font-size: 10.5px;
  line-height: 21px;
  white-space: nowrap;
}
.account {
  width: 237px;
  position: relative;
  background: linear-gradient(#8a8a8a, #5d5d5d);
  border-bottom: 1px solid #333;
  box-sizing: border-box;
  display: flex;
  align-items: center;
  padding-left: 3px;
}
.account > svg { margin-top: 1px; }
.acc-user { margin-left: 4px; }
.sign-in { margin-left: 4px; color: #e8e8e8; width: 78.5px; font-size: 11px; }
.acc-cart { margin-left: 8px; }
.acc-tri { margin-left: 4px; }
.acc-caret2 { margin-left: 2.5px; }
.acc-help { margin-left: 15px; }
.acc-caret3 { margin-left: 4px; }
.window-btns {
  flex: 1;
  display: flex;
  align-items: center;
  padding-left: 38px;
  gap: 30px;
}

/* menu bar */
.menubar {
  height: 19px;
  flex: none;
  display: flex;
  align-items: center;
  gap: 23px;
  padding-left: 52px;
  position: relative;
  background: linear-gradient(#6e6e6e, #4a4a4a);
  color: #dedede;
  font-size: 11px;
  white-space: nowrap;
}
.doc-btns {
  position: absolute;
  right: 3px;
  top: 4px;
  display: flex;
  gap: 4px;
}

/* ribbon tabs */
.tabs {
  height: 20px;
  flex: none;
  box-sizing: border-box;
  display: flex;
  align-items: center;
  padding-left: 4px;
  gap: 18.8px;
  background: #3f3f3f;
  border-top: 1px solid #2c2c2c;
  border-bottom: 1px solid #6a6a6a;
  color: #bdbdbd;
  font-size: 11px;
  white-space: nowrap;
}
.tab-active {
  height: 19px;
  line-height: 18px;
  padding: 0 9px;
  margin-right: -7.3px;
  background: #4e4e4e;
  border: 1px solid #707070;
  border-bottom: none;
  color: #fff;
}
.tab-extra {
  display: flex;
  align-items: center;
  gap: 3px;
}

/* ribbon */
.ribbon {
  height: 94px;
  flex: none;
  box-sizing: border-box;
  display: flex;
  padding: 1px 0 1px 2px;
  gap: 2px;
  background: #3d3d3d;
  border-bottom: 2px solid #7a7a7a;
}
.panel {
  display: flex;
  flex-direction: column;
  flex: none;
  box-sizing: border-box;
  background: #4c4c4c;
}
.panel-body {
  height: 71px;
  flex: none;
  display: flex;
  position: relative;
}
.body-center { justify-content: center; }
.body-col { flex-direction: column; padding: 4px 0 0 2px; box-sizing: border-box; gap: 1px; }
.panel-title {
  flex: 1;
  background: #444;
  display: flex;
  align-items: center;
  justify-content: center;
  gap: 6px;
  color: #d4d4d4;
  white-space: nowrap;
}
.title-launch { position: relative; padding-right: 11px; }
.title-section { padding-right: 16px; }
.title-launch .launch { position: absolute; right: 4px; top: 7px; }

.p-modeling { width: 122px; }
.p-mesh { width: 71px; }
.p-solid { width: 87px; }
.p-draw { width: 87px; }
.p-modify { width: 134px; }
.p-section { width: 69px; }
.p-coord { width: 134px; }
.p-view { width: 117px; }
.p-selection { width: 159px; }
.panel-slim {
  width: 54px;
  background: linear-gradient(#5c5c5c, #4a4a4a);
  align-items: center;
  position: relative;
}
.p-groups { margin-left: 1px; }
.p-viewslim { margin-left: 1px; width: 55px; }

.big {
  display: flex;
  flex-direction: column;
  align-items: center;
  padding-top: 4px;
  line-height: 14px;
  color: #e2e2e2;
  white-space: nowrap;
  box-sizing: border-box;
  position: relative;
}
.big svg { margin-bottom: 2px; }
.big .caret { margin-top: 3px; }
.big-box { width: 42px; }
.big-extrude { width: 52px; }
.big-smooth { width: 48px; }
.big-culling {
  width: 41px;
  height: 66px;
  margin: 3px 0 0 2px;
  padding-top: 1px;
  background: linear-gradient(#6c93c2, #4f77a8);
  border: 1px solid #88a9d0;
  color: #e8eef6;
}
.big-filter { width: 58px; margin-left: 2px; }
.big-gizmo { width: 56px; }
.big .gizmo-caret { position: absolute; right: 4px; top: 29px; margin: 0; }

.tool-col { display: flex; flex-direction: column; padding-top: 2px; }
.col-model { width: 30px; }
.col-mesh { width: 23px; }
.tool {
  height: 23px;
  display: flex;
  align-items: center;
  justify-content: center;
}
.tool svg { width: 18px; height: 18px; }
.tool-grid {
  display: grid;
  grid-auto-rows: 23px;
  padding-top: 2px;
}
.grid-solid { grid-template-columns: 25px 26px 26px 5px; margin-left: 1px; }
.grid-draw { grid-template-columns: 25px 25px 25px 5px; padding-left: 1px; }
.grid-modify { grid-template-columns: repeat(5, 25px) 5px; margin-left: -1px; }
.grid-coord { grid-template-columns: 26px 6px 6px repeat(4, 24px); }

.combo {
  height: 21px;
  width: 112px;
  box-sizing: border-box;
  display: flex;
  align-items: center;
  gap: 2px;
  padding: 0 5px 0 0;
  background: #4a4a4a;
  border: 1px solid #333;
  box-shadow: inset 0 0 0 1px #5c5c5c;
  color: #e0e0e0;
  font-size: 11px;
  white-space: nowrap;
}
.combo-caret { margin-left: auto; }
.combo-top {
  grid-column: 4 / 8;
  width: 94px;
  height: 20px;
  align-self: center;
  background: #555;
}
.view-tool {
  display: flex;
  align-items: center;
  gap: 6px;
  padding: 1px 0 0 2px;
}

.slim-body {
  height: 73px;
  display: flex;
  flex-direction: column;
  align-items: center;
  padding-top: 4px;
  box-sizing: border-box;
  color: #e2e2e2;
  line-height: 14px;
  gap: 1px;
}
.slim-top { padding-top: 3px; gap: 3px; }
.folder { margin: 5px 0 7px; }
.slim-caret { position: absolute; top: 82px; left: 50%; margin-left: -4px; }

/* drawing area */
.canvas-row {
  height: 499px;
  flex: none;
  display: flex;
}
.canvas {
  width: 1272px;
  position: relative;
  background: #212830;
}
.scroll-strip {
  width: 7px;
  background: linear-gradient(90deg, #e8eff4, #a9c8dc);
}
.drawing { position: absolute; left: 0; top: 0; }
.edge { fill: none; stroke: #d6d8da; stroke-width: 1.2; }
.cursor { fill: none; stroke: #d8d8d8; stroke-width: 1; }
.ucs-letter {
  font-family: "Liberation Sans", sans-serif;
  font-size: 18px;
  font-weight: 400;
  fill: #d8d8d8;
  text-anchor: middle;
}
.viewport-label {
  position: absolute;
  left: 3px;
  top: 7px;
  font-size: 11.5px;
  color: #d0d3d6;
  white-space: nowrap;
}
.viewcube {
  position: absolute;
  left: 1163px;
  top: 8px;
  width: 102px;
  height: 102px;
}
.cube-ring {
  position: absolute;
  left: 8px;
  top: 9px;
  width: 85px;
  height: 85px;
  box-sizing: border-box;
  border: 9px solid #4b5159;
  border-radius: 50%;
}
.cube-face {
  position: absolute;
  left: 33px;
  top: 33px;
  width: 35px;
  height: 35px;
  background: #b3b5b8;
  box-shadow: inset 0 0 0 7px #bcbec0;
  display: flex;
  align-items: center;
  justify-content: center;
}
.cube-face span { font-size: 8.5px; color: #55585c; }
.dir {
  position: absolute;
  font-family: "Liberation Sans", sans-serif;
  font-size: 15px;
  line-height: 16px;
  color: #c6c9cc;
}
.dir-n { left: 44px; top: 4px; }
.dir-s { left: 45px; top: 82px; }
.dir-e { left: 87px; top: 43px; }
.dir-w { left: 1px; top: 43px; }
.ucs-menu {
  position: absolute;
  left: 1182px;
  top: 120px;
  width: 63px;
  height: 16px;
  box-sizing: border-box;
  border-radius: 4px;
  background: #8a8e98;
  border: 1px solid #777;
  color: #555962;
  font-size: 10.5px;
  line-height: 14px;
  padding-left: 3px;
  white-space: nowrap;
  display: flex;
  align-items: center;
  gap: 6px;
}
.tri-outline {
  width: 0;
  height: 0;
  border-left: 3.5px solid transparent;
  border-right: 3.5px solid transparent;
  border-top: 5px solid #a6aab2;
}
.navbar {
  position: absolute;
  left: 1239px;
  top: 160px;
  width: 30px;
  height: 199px;
  border-radius: 3px;
  background: #5f6368;
}

/* status bar */
.statusbar {
  height: 27px;
  flex: none;
  display: flex;
  background: #45443f;
  border-top: 1px solid #2a2a2a;
  box-sizing: border-box;
}
.model-tabs {
  flex: 1;
  display: flex;
  align-items: flex-start;
  padding: 1px 0 0 12px;
  gap: 5px;
}
.mtab {
  height: 16px;
  line-height: 15px;
  width: 54px;
  text-align: center;
  background: linear-gradient(#646464, #565656);
  color: #b8b8b8;
  font-size: 11px;
  clip-path: polygon(5px 0, 100% 0, calc(100% - 5px) 100%, 0 100%);
  white-space: nowrap;
}
.mtab-active {
  width: 52px;
  color: #f2f2f2;
  font-weight: 700;
  font-size: 11.5px;
  background: linear-gradient(#7d7d7d, #6c6c6c);
}
.mtab-wide { width: 58px; }
.mtab-plus { width: 18px; margin-left: 1px; font-weight: 700; color: #ddd; font-size: 14px; line-height: 14px; }
.status-groups {
  display: flex;
  height: 25px;
}
.s-group {
  display: flex;
  background: #4f4f4e;
  box-shadow: inset 0 0 0 1px #6c6c6c;
}
.s-cell {
  display: flex;
  align-items: center;
  justify-content: center;
  color: #e0e0e0;
  font-size: 12px;
  flex: none;
  white-space: nowrap;
}

/* taskbar */
.taskbar {
  height: 38px;
  flex: none;
  display: flex;
  background: #05080c;
  position: relative;
}
.task {
  width: 45px;
  height: 38px;
  box-sizing: border-box;
  display: flex;
  align-items: center;
  justify-content: center;
  flex: none;
}
.task-edge { margin-left: 4px; }
.edge-e {
  font-family: "Liberation Sans", sans-serif;
  font-weight: 700;
  font-size: 32px;
  line-height: 32px;
  color: #0f78d4;
  margin-top: -6px;
}
.task-open { border-bottom: 2px solid #76b9ed; }
.task-snip { margin-left: 3px; }
.task-cad {
  background: #2b2f33;
  border-bottom: 2px solid #76b9ed;
}
.cad-logo {
  width: 22px;
  height: 22px;
  background: #f2ece8;
  color: #c8202a;
  font-family: "Liberation Sans", sans-serif;
  font-weight: 700;
  font-size: 21px;
  line-height: 22px;
  text-align: center;
}
.tray {
  position: absolute;
  left: 1010px;
  right: 0;
  top: 0;
  height: 38px;
  display: flex;
  align-items: center;
  color: #e8e8e8;
  font-size: 11px;
}
.tray-chev { margin-left: 18px; }
.tray-power { margin-left: 8px; }
.tray-vol { margin-left: 7px; }
.tray-wifi { margin-left: 8px; }
.tray-lang { margin-left: 9px; width: 23px; }
.tray-clock {
  display: flex;
  flex-direction: column;
  align-items: center;
  width: 60px;
  margin-left: 9px;
  line-height: 17px;
}
.tray-notif { position: relative; margin-left: 14px; }
.notif-badge {
  position: absolute;
  left: 8px;
  top: 7px;
  width: 14px;
  height: 14px;
  border-radius: 50%;
  background: #333;
  border: 1px solid #aaa;
  box-sizing: border-box;
  font-size: 10px;
  line-height: 12px;
  text-align: center;
  color: #fff;
  font-weight: 700;
}
</style>

<style>
html, body { margin: 0; background: #212830; overflow: hidden; }
</style>
